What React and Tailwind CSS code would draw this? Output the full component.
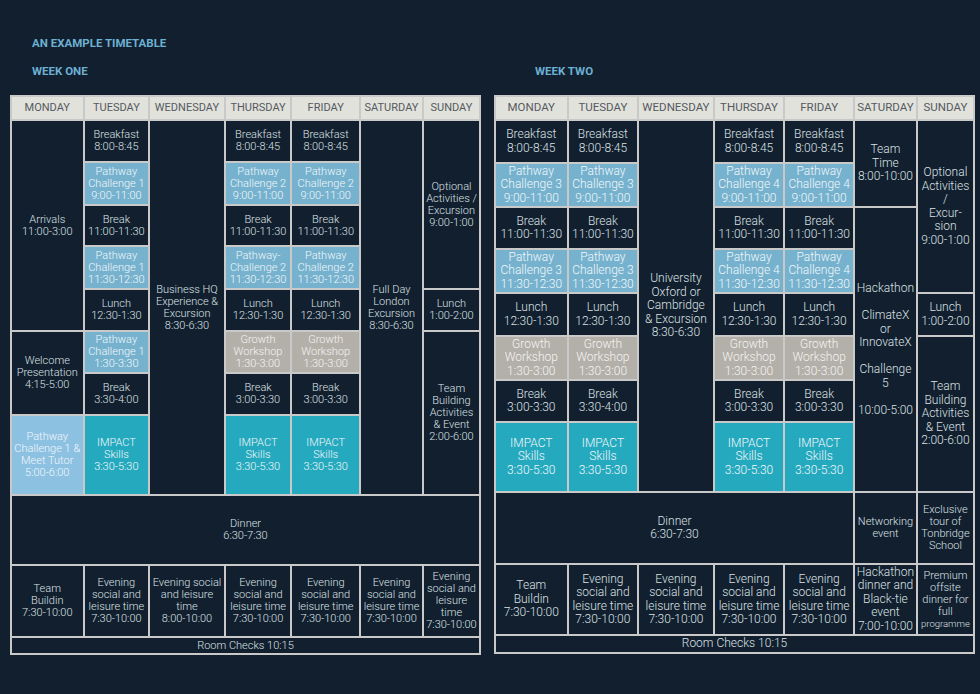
const days = ["Monday", "Tuesday", "Wednesday", "Thursday", "Friday", "Saturday", "Sunday"];

const tone = {
  dark: "bg-[#111f2e] text-[#dde1e5]",
  blue: "bg-[#76b2ce] text-[#f2f7fa]",
  pale: "bg-[#8dc1e2] text-[#f2f7fa]",
  teal: "bg-[#25a9be] text-[#f2f7fa]",
  grey: "bg-[#b3b0a9] text-[#f4f4f2]",
};

// cells are listed in table order; the grid's auto placement fills them in like an html table
const weekOne = [
  { lines: ["Arrivals", "11:00-3:00"], span: "row-span-5" },
  { lines: ["Breakfast", "8:00-8:45"] },
  { lines: ["Business HQ", "Experience &", "Excursion", "8:30-6:30"], span: "row-span-8" },
  { lines: ["Breakfast", "8:00-8:45"] },
  { lines: ["Breakfast", "8:00-8:45"] },
  { lines: ["Full Day", "London", "Excursion", "8:30-6:30"], span: "row-span-8" },
  { lines: ["Optional", "Activities /", "Excursion", "9:00-1:00"], span: "row-span-4" },

  { lines: ["Pathway", "Challenge 1", "9:00-11:00"], tone: "blue" },
  { lines: ["Pathway", "Challenge 2", "9:00-11:00"], tone: "blue" },
  { lines: ["Pathway", "Challenge 2", "9:00-11:00"], tone: "blue" },

  { lines: ["Break", "11:00-11:30"] },
  { lines: ["Break", "11:00-11:30"] },
  { lines: ["Break", "11:00-11:30"] },

  { lines: ["Pathway", "Challenge 1", "11:30-12:30"], tone: "blue" },
  { lines: ["Pathway-", "Challenge 2", "11:30-12:30"], tone: "blue" },
  { lines: ["Pathway", "Challenge 2", "11:30-12:30"], tone: "blue" },

  { lines: ["Lunch", "12:30-1:30"] },
  { lines: ["Lunch", "12:30-1:30"] },
  { lines: ["Lunch", "12:30-1:30"] },
  { lines: ["Lunch", "1:00-2:00"] },

  { lines: ["Welcome", "Presentation", "4:15-5:00"], span: "row-span-2" },
  { lines: ["Pathway", "Challenge 1", "1:30-3:30"], tone: "blue" },
  { lines: ["Growth", "Workshop", "1:30-3:00"], tone: "grey" },
  { lines: ["Growth", "Workshop", "1:30-3:00"], tone: "grey" },
  { lines: ["Team", "Building", "Activities", "& Event", "2:00-6:00"], span: "row-span-3" },

  { lines: ["Break", "3:30-4:00"] },
  { lines: ["Break", "3:00-3:30"] },
  { lines: ["Break", "3:00-3:30"] },

  { lines: ["Pathway", "Challenge 1 &", "Meet Tutor", "5:00-6:00"], tone: "pale" },
  { lines: ["IMPACT", "Skills", "3:30-5:30"], tone: "teal" },
  { lines: ["IMPACT", "Skills", "3:30-5:30"], tone: "teal" },
  { lines: ["IMPACT", "Skills", "3:30-5:30"], tone: "teal" },

  { lines: ["Dinner", "6:30-7:30"], span: "col-span-7" },

  { lines: ["Team", "Buildin", "7:30-10:00"] },
  { lines: ["Evening", "social and", "leisure time", "7:30-10:00"] },
  { lines: ["Evening social", "and leisure", "time", "8:00-10:00"] },
  { lines: ["Evening", "social and", "leisure time", "7:30-10:00"] },
  { lines: ["Evening", "social and", "leisure time", "7:30-10:00"] },
  { lines: ["Evening", "social and", "leisure time", "7:30-10:00"] },
  { lines: ["Evening", "social and", "leisure", "time", "7:30-10:00"] },

  { lines: ["Room Checks 10:15"], span: "col-span-7" },
];

const weekTwo = [
  { lines: ["Breakfast", "8:00-8:45"] },
  { lines: ["Breakfast", "8:00-8:45"] },
  { lines: ["University", "Oxford or", "Cambridge", "& Excursion", "8:30-6:30"], span: "row-span-8" },
  { lines: ["Breakfast", "8:00-8:45"] },
  { lines: ["Breakfast", "8:00-8:45"] },
  { lines: ["Team", "Time", "8:00-10:00"], span: "row-span-2" },
  { lines: ["Optional", "Activities", "/", "Excur-", "sion", "9:00-1:00"], span: "row-span-4" },

  { lines: ["Pathway", "Challenge 3", "9:00-11:00"], tone: "blue" },
  { lines: ["Pathway", "Challenge 3", "9:00-11:00"], tone: "blue" },
  { lines: ["Pathway", "Challenge 4", "9:00-11:00"], tone: "blue" },
  { lines: ["Pathway", "Challenge 4", "9:00-11:00"], tone: "blue" },

  { lines: ["Break", "11:00-11:30"] },
  { lines: ["Break", "11:00-11:30"] },
  { lines: ["Break", "11:00-11:30"] },
  { lines: ["Break", "11:00-11:30"] },
  {
    lines: ["Hackathon", "", "ClimateX", "or", "InnovateX", "", "Challenge", "5", "", "10:00-5:00"],
    span: "row-span-6",
  },

  { lines: ["Pathway", "Challenge 3", "11:30-12:30"], tone: "blue" },
  { lines: ["Pathway", "Challenge 3", "11:30-12:30"], tone: "blue" },
  { lines: ["Pathway", "Challenge 4", "11:30-12:30"], tone: "blue" },
  { lines: ["Pathway", "Challenge 4", "11:30-12:30"], tone: "blue" },

  { lines: ["Lunch", "12:30-1:30"] },
  { lines: ["Lunch", "12:30-1:30"] },
  { lines: ["Lunch", "12:30-1:30"] },
  { lines: ["Lunch", "12:30-1:30"] },
  { lines: ["Lunch", "1:00-2:00"] },

  { lines: ["Growth", "Workshop", "1:30-3:00"], tone: "grey" },
  { lines: ["Growth", "Workshop", "1:30-3:00"], tone: "grey" },
  { lines: ["Growth", "Workshop", "1:30-3:00"], tone: "grey" },
  { lines: ["Growth", "Workshop", "1:30-3:00"], tone: "grey" },
  { lines: ["Team", "Building", "Activities", "& Event", "2:00-6:00"], span: "row-span-3" },

  { lines: ["Break", "3:00-3:30"] },
  { lines: ["Break", "3:30-4:00"] },
  { lines: ["Break", "3:00-3:30"] },
  { lines: ["Break", "3:00-3:30"] },

  { lines: ["IMPACT", "Skills", "3:30-5:30"], tone: "teal" },
  { lines: ["IMPACT", "Skills", "3:30-5:30"], tone: "teal" },
  { lines: ["IMPACT", "Skills", "3:30-5:30"], tone: "teal" },
  { lines: ["IMPACT", "Skills", "3:30-5:30"], tone: "teal" },

  { lines: ["Dinner", "6:30-7:30"], span: "col-span-5" },
  { lines: ["Networking", "event"], small: true },
  { lines: ["Exclusive", "tour of", "Tonbridge", "School"], small: true },

  { lines: ["Team", "Buildin", "7:30-10:00"] },
  { lines: ["Evening", "social and", "leisure time", "7:30-10:00"] },
  { lines: ["Evening", "social and", "leisure time", "7:30-10:00"] },
  { lines: ["Evening", "social and", "leisure time", "7:30-10:00"] },
  { lines: ["Evening", "social and", "leisure time", "7:30-10:00"] },
  { lines: ["Hackathon", "dinner and", "Black-tie", "event", "7:00-10:00"] },
  { lines: ["Premium", "offsite", "dinner for", "full", "programme"], small: true, tiny: 4 },

  { lines: ["Room Checks 10:15"], span: "col-span-7" },
];

const Cell = ({ cell, text }) => (
  <div
    className={`flex flex-col items-center justify-center text-center font-light whitespace-nowrap overflow-hidden ${
      tone[cell.tone || "dark"]
    } ${cell.span || ""} ${cell.small ? "text-[11px] leading-[12px]" : text}`}
  >
    {cell.lines.map((line, i) => (
      <div key={i} className={cell.tiny === i ? "text-[9.5px]" : ""}>
        {line || "\u00a0"}
      </div>
    ))}
  </div>
);

const Timetable = ({ cells, cols, rows, width, text, head }) => (
  <div className={`grid gap-[2px] p-[2px] bg-[#c9c9c9] ${cols} ${rows} ${width}`}>
    {days.map((day) => (
      <div
        key={day}
        className={`flex items-center justify-center bg-[#e2e2dd] text-[#555a5e] uppercase ${head}`}
      >
        {day}
      </div>
    ))}
    {cells.map((cell, i) => (
      <Cell key={i} cell={cell} text={text} />
    ))}
  </div>
);

export default function App() {
  return (
    <div className="w-[980px] h-[694px] bg-[#111f2e] font-['Roboto','Liberation_Sans',sans-serif] pt-[37px]">
      <h1 className="pl-[32px] text-[11.5px] leading-[12px] font-bold text-[#6cb0d2]">
        AN EXAMPLE TIMETABLE
      </h1>
      <div className="flex gap-[13px] px-[10px] mt-[16px]">
        <div>
          <h2 className="pl-[22px] mb-[18px] text-[11.5px] leading-[12px] font-bold text-[#6cb0d2]">
            WEEK ONE
          </h2>
          <Timetable
            cells={weekOne}
            width="w-[471px]"
            cols="grid-cols-[73fr_66fr_76fr_67fr_69fr_63fr_57fr]"
            rows="grid-rows-[22px_40px_41px_39px_41px_40px_40px_40px_78px_68px_70px_15px]"
            text="text-[11px] leading-[12px]"
            head="text-[11px]"
          />
        </div>
        <div>
          <h2 className="pl-[41px] mb-[18px] text-[11.5px] leading-[12px] font-bold text-[#6cb0d2]">
            WEEK TWO
          </h2>
          <Timetable
            cells={weekTwo}
            width="w-[481px]"
            cols="grid-cols-[73fr_71fr_76fr_71fr_70fr_63fr_57fr]"
            rows="grid-rows-[22px_41px_42px_40px_42px_41px_42px_40px_68px_70px_69px_16px]"
            text="text-[12px] leading-[13.5px]"
            head="text-[11.5px]"
          />
        </div>
      </div>
    </div>
  );
}
